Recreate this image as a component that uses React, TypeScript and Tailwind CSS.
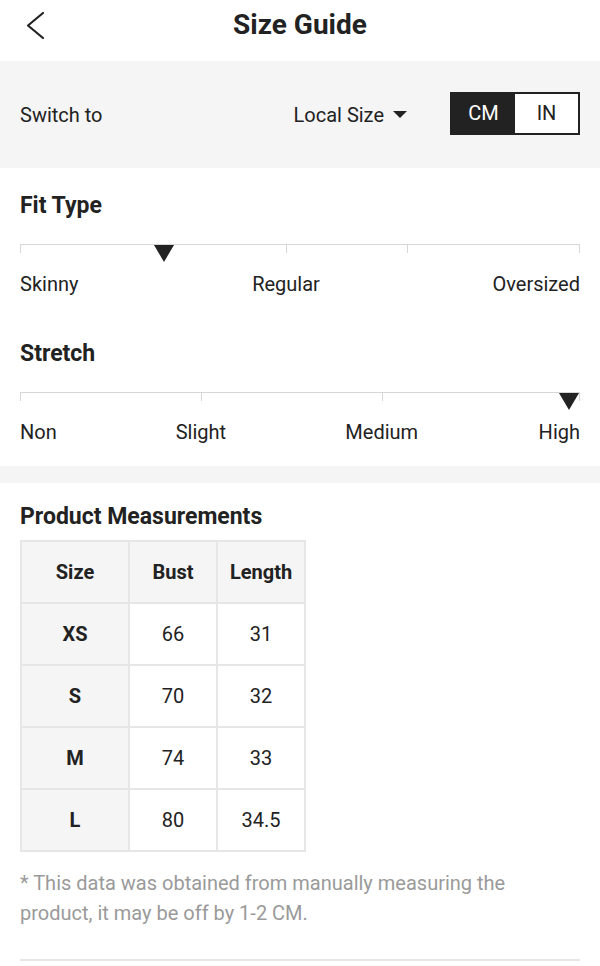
const FIT = { ticks: [0, 47.5, 69.1, 100], marker: 25.7 };
const STRETCH = { ticks: [0, 32.3, 64.6, 100], marker: 98 };

const ROWS = [
  ["XS", "66", "31"],
  ["S", "70", "32"],
  ["M", "74", "33"],
  ["L", "80", "34.5"],
];

function Scale({ ticks, marker }: { ticks: number[]; marker: number }) {
  return (
    <div className="relative h-[18px] mt-[23px]">
      <div className="absolute left-0 right-0 top-0 border-t border-[#d6d6d6]" />
      {ticks.map((t) => (
        <div key={t} className="absolute top-0 w-px h-[9px] bg-[#d6d6d6]" style={{ left: `calc(${t}% - ${t === 100 ? 1 : 0}px)` }} />
      ))}
      <div
        className="absolute top-[1px] w-0 h-0 border-l-[10px] border-r-[10px] border-t-[17px] border-l-transparent border-r-transparent border-t-[#222]"
        style={{ left: `calc(${marker}% - 10px)` }}
      />
    </div>
  );
}

export default function App() {
  return (
    <div className="w-[600px] min-h-[966px] bg-white text-[#222] font-['Roboto',sans-serif]">
      {/* header */}
      <div className="relative h-[61px] flex items-center justify-center">
        <svg className="absolute left-[24px] top-[11px]" width="24" height="30" viewBox="0 0 24 30" fill="none">
          <polyline points="19,2 4,14.5 19,27" stroke="#222" strokeWidth="2.2" strokeLinecap="round" strokeLinejoin="round" />
        </svg>
        <h1 className="text-[28px] font-bold leading-none mt-[-11px]">Size Guide</h1>
      </div>

      {/* unit switch */}
      <div className="h-[107px] bg-[#f5f5f5] flex items-center px-5 text-[20px]">
        <span className="flex-1">Switch to</span>
        <span className="flex items-center mr-[43px]">
          Local Size
          <span className="ml-[9px] w-0 h-0 border-l-[7px] border-r-[7px] border-t-[7px] border-l-transparent border-r-transparent border-t-[#222]" />
        </span>
        <div className="flex h-[43px] border-2 border-[#222] mt-[-3px]">
          <div className="w-[63px] bg-[#222] text-white flex items-center justify-center">CM</div>
          <div className="w-[63px] bg-white flex items-center justify-center">IN</div>
        </div>
      </div>

      {/* fit / stretch */}
      <div className="px-5 pt-[23px] pb-[20px]">
        <h2 className="text-[23px] font-bold leading-[30px]">Fit Type</h2>
        <Scale ticks={FIT.ticks} marker={FIT.marker} />
        <div className="relative h-[28px] text-[20px] leading-[28px] mt-[8px]">
          <span className="absolute left-0">Skinny</span>
          <span className="absolute -translate-x-1/2" style={{ left: "47.5%" }}>Regular</span>
          <span className="absolute right-0">Oversized</span>
        </div>

        <h2 className="text-[23px] font-bold leading-[30px] mt-[41px]">Stretch</h2>
        <Scale ticks={STRETCH.ticks} marker={STRETCH.marker} />
        <div className="relative h-[28px] text-[20px] leading-[28px] mt-[8px]">
          <span className="absolute left-0">Non</span>
          <span className="absolute -translate-x-1/2" style={{ left: "32.3%" }}>Slight</span>
          <span className="absolute -translate-x-1/2" style={{ left: "64.6%" }}>Medium</span>
          <span className="absolute right-0">High</span>
        </div>
      </div>

      <div className="h-[17px] bg-[#f5f5f5]" />

      {/* measurements */}
      <div className="px-5 pt-[19px]">
        <h2 className="text-[23px] font-bold leading-[30px]">Product Measurements</h2>
        <table className="mt-[8px] border-collapse text-[20px] text-center">
          <thead>
            <tr className="bg-[#f5f5f5]">
              <th className="w-[108px] h-[62px] border-2 border-[#e6e6e6] font-bold">Size</th>
              <th className="w-[88px] border-2 border-[#e6e6e6] font-bold">Bust</th>
              <th className="w-[88px] border-2 border-[#e6e6e6] font-bold">Length</th>
            </tr>
          </thead>
          <tbody>
            {ROWS.map(([s, b, l]) => (
              <tr key={s}>
                <td className="h-[62px] bg-[#f5f5f5] font-bold border-2 border-[#e6e6e6]">{s}</td>
                <td className="border-2 border-[#e6e6e6]">{b}</td>
                <td className="border-2 border-[#e6e6e6]">{l}</td>
              </tr>
            ))}
          </tbody>
        </table>

        <p className="mt-[16px] text-[20px] leading-[30px] text-[#9a9a9a] pr-[60px]">
          * This data was obtained from manually measuring the product, it may be off by 1-2 CM.
        </p>
        <div className="mt-[31px] border-t-2 border-[#e6e6e6]" />
      </div>
    </div>
  );
}
